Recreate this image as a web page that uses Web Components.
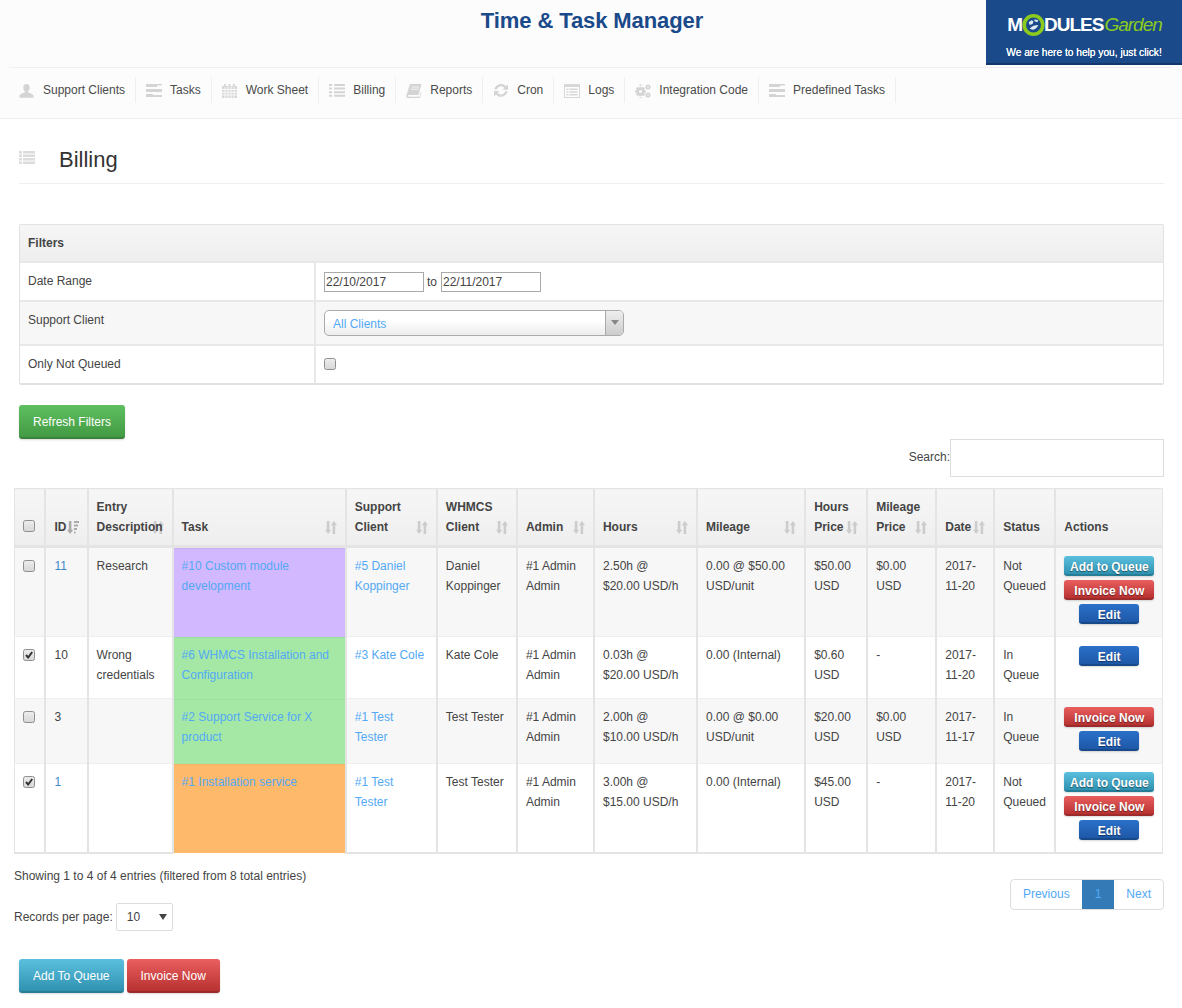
<!DOCTYPE html>
<html><head><meta charset="utf-8"><title>Time &amp; Task Manager</title>
<style>
html,body{margin:0;padding:0;background:#fff}
body{font:12px/20px "Liberation Sans",Arial,sans-serif;color:#444;width:1182px;height:1008px;overflow:hidden}
</style></head><body>
<tm-header></tm-header>
<tm-nav></tm-nav>
<tm-title>Billing</tm-title>
<tm-filters></tm-filters>
<tm-btn color="green" size="big" style="margin:20px 0 0 19px">Refresh Filters</tm-btn>
<tm-search></tm-search>
<tm-table></tm-table>
<tm-footer></tm-footer>
<script>
const ICONS={
user:'<svg width="15" height="14" viewBox="0 1 15 14"><path fill="#d4d4d4" d="M7.500 1C9.600 1 10.800 2.600 10.800 4.600 10.800 6.400 9.900 7.600 9.200 8.200V9.400C11 10 14.500 10.800 14.500 13V14.800H.5V13C.5 10.800 4 10 5.800 9.400V8.200C5.100 7.600 4.200 6.400 4.200 4.600 4.200 2.600 5.400 1 7.500 1Z"/></svg>',
tasks:'<svg width="16" height="13" viewBox="0 0 16 13"><path fill="#d4d4d4" d="M0 0h16v1.400H11V3H0zM0 5h16v3H0zM0 10h7v1h9v2H0z"/></svg>',
cal:'<svg width="15" height="14" viewBox="0 0 15 14"><path fill="#d8d8d8" d="M0 2h15v12H0z"/><path stroke="#fcfcfc" stroke-width=".9" d="M0 5.500h15M0 8.300h15M0 11h15M3 2v12M6 2v12M9 2v12M12 2v12"/><path fill="#d8d8d8" d="M2 0h2v3H2zM6.500 0h2v3h-2zM11 0h2v3h-2z"/></svg>',
list:'<svg width="16" height="13" viewBox="0 0 16 13"><path fill="#d4d4d4" d="M0 0h3v2H0zM5 0h11v2H5zM0 3.600h3v2H0zM5 3.600h11v2H5zM0 7.200h3v2H0zM5 7.200h11v2H5zM0 10.800h3v2H0zM5 10.800h11v2H5z"/></svg>',
tlist:'<svg width="16" height="13" viewBox="0 0 16 13"><path fill="#dcdcdc" d="M0 0h3v2.400H0zM4 0h12v2.400H4zM0 3.500h3v2.400H0zM4 3.500h12v2.400H4zM0 7h3v2.400H0zM4 7h12v2.400H4zM0 10.500h3v2.400H0zM4 10.500h12v2.400H4z"/></svg>',
book:'<svg width="16" height="14" viewBox="0 0 16 14"><path fill="#d4d4d4" d="M4 0H15.500L12.500 11H3C2.300 11 2 11.500 2.100 12S2.600 12.800 3.200 12.800H13.500L14.800 8 15.500 9 13.800 14H2.500C.8 14 0 13 .3 11.400Z"/><path stroke="#fcfcfc" stroke-width=".8" d="M5.500 3H13M5 5.200H12.500"/></svg>',
cron:'<svg width="16" height="14" viewBox="0 1 16 14"><path fill="#d4d4d4" d="M8 1C10 1 11.800 1.900 13 3.300L15 1.400V6.800H9.600L11.400 5C10.600 4 9.400 3.300 8 3.300 6 3.300 4.300 4.700 3.800 6.500H1.400C2 3.400 4.700 1 8 1ZM1 8H6.400L4.600 9.800C5.400 10.800 6.600 11.500 8 11.500 10 11.500 11.700 10.100 12.200 8.300H14.600C14 11.400 11.300 13.800 8 13.800 6 13.800 4.200 12.900 3 11.500L1 13.400Z"/></svg>',
logs:'<svg width="16" height="14" viewBox="0 0 16 14"><path fill="#d8d8d8" d="M0 0h16v14H0z"/><path fill="#fcfcfc" d="M1 3h14v10H1z"/><path fill="#d8d8d8" d="M2.500 4.500h2v1.400h-2zM5.500 4.500h8v1.400h-8zM2.500 7.300h2v1.400h-2zM5.500 7.300h8v1.400h-8zM2.500 10h2v1.400h-2zM5.500 10h8v1.400h-8z"/></svg>',
gears:'<svg width="16" height="14" viewBox="0 0 16 14"><g fill="none" stroke="#d4d4d4"><circle cx="5.500" cy="7.500" r="3" stroke-width="3"/><circle cx="13" cy="3" r="1.700" stroke-width="1.800"/><circle cx="13" cy="11" r="1.700" stroke-width="1.800"/><path stroke-width="2" d="M5.500 2V0.500M5.500 13v1.500M0 7.500h1.500M9.500 7.500H11M1.700 3.700l1 1M8.300 10.300l1 1M1.700 11.300l1-1M8.300 4.700l1-1"/></g></svg>'
};
function tpl(css,html){return `<style>${css}</style>${html}`}
class TmBase extends HTMLElement{
  constructor(){super();this.attachShadow({mode:'open'})}
  set(css,html){this.shadowRoot.innerHTML=tpl(css,html)}
}
customElements.define('tm-btn',class extends TmBase{connectedCallback(){
  const c={green:['#5fc060','#439a43','#3a843a'],cyan:['#5bc0de','#2f92b0','#277c96'],red:['#ea5e5e','#b83232','#9c2b2b'],blue:['#2b70c9','#1e58a8','#184988']}[this.getAttribute('color')];
  const big=this.getAttribute('size')==='big';
  this.set(`:host{display:${big?'inline-block':'block'};box-sizing:border-box;${big?'height:34px;padding:0 14px;line-height:34px;font-size:12px;':`height:20px;line-height:22px;font-size:12px;font-weight:bold;text-shadow:0 1px 1px rgba(0,0,0,.45);margin:0 auto 4px;`}
   color:#fff;text-align:center;white-space:nowrap;border-radius:3px;border-bottom:2px solid ${c[2]};background:linear-gradient(${c[0]},${c[1]});box-shadow:0 1px 2px rgba(0,0,0,.15)}`,`<slot></slot>`);
}});
customElements.define('tm-check',class extends TmBase{connectedCallback(){
  const on=this.hasAttribute('checked');
  this.set(`:host{display:block;width:12px;height:12px;line-height:0}
  input{appearance:none;-webkit-appearance:none;box-sizing:border-box;width:12px;height:12px;margin:0;display:block;border:1px solid #8f8f8f;border-radius:2.500px;background:linear-gradient(#ececec,#d8d8d8);position:relative}
  svg{position:absolute;left:1px;top:1px}
  div{position:relative}`,`<div><input type="checkbox" ${on?'checked':''} aria-label="select">${on?'<svg width="10" height="10" viewBox="0 0 10 10"><path fill="none" stroke="#333" stroke-width="2" d="M2 5l2.200 2.500L8.200 2"/></svg>':''}</div>`);
}});
customElements.define('tm-header',class extends TmBase{connectedCallback(){
  this.set(`:host{display:flex;justify-content:center;position:relative;height:67px;background:#fcfcfc;box-sizing:border-box}
  h1{margin:6px 0 0;padding-left:2px;letter-spacing:-.1px;font:bold 22px/29px "Liberation Sans",Arial,sans-serif;color:#1a4a8a}
  .logo{position:absolute;right:0;top:0;width:196px;height:65px;box-sizing:border-box;background:#1a4a8a;border-bottom:2px solid #123768;color:#fff;display:flex;flex-direction:column;align-items:center}
  .brand{display:flex;align-items:center;height:24px;margin-top:13px;font:bold 19px/24px "Liberation Sans",Arial,sans-serif;letter-spacing:-1px;padding-left:1px}
  .brand svg{margin:0 -1px 0 0}
  .g{font-weight:normal;font-style:italic;color:#8ccb1e;margin-left:1px}
  .sub{font:normal 10.200px/14px "Liberation Sans",Arial,sans-serif;margin-top:9px;text-shadow:0 0 .6px #fff}`,
  `<h1>Time &amp; Task Manager</h1><div class="logo"><div class="brand"><span>M</span><svg width="23" height="24" viewBox="0 0 24 24"><circle cx="12" cy="12" r="9.700" fill="#1a4a8a" stroke="#8ccb1e" stroke-width="3.800"/><path fill="#dfe9f4" d="M7 9l3-2 2 1-1 3-3 1zM13 6l4 1-1 2-3-1zM8 16c2-3 6-4 9-4-1 3-4 5-6 5z"/></svg><span>DULES</span><span class="g">Garden</span></div><div class="sub">We are here to help you, just click!</div></div>`);
}});
customElements.define('tm-nav',class extends TmBase{connectedCallback(){
  const items=[['user','Support Clients'],['tasks','Tasks'],['cal','Work Sheet'],['list','Billing'],['book','Reports'],['cron','Cron'],['logs','Logs'],['gears','Integration Code'],['tasks','Predefined Tasks']];
  this.set(`:host{display:block;height:52px;box-sizing:border-box;background:#fcfcfc;border-bottom:1px solid #efefef;position:relative;padding:10px 0 0 9px}
  :host::before{content:"";position:absolute;left:9px;right:9px;top:0;border-top:1px solid #efefef}
  ul{list-style:none;margin:0;padding:0;display:flex}
  li{display:flex;align-items:center;height:26px;padding:0 10px;border-right:1px solid #efefef;color:#4a4a4a;white-space:nowrap}
  i{display:block;width:24px;height:14px;line-height:0;margin-top:1px}`,
  `<ul>${items.map(([i,t])=>`<li><i>${ICONS[i]}</i><span>${t}</span></li>`).join('')}</ul>`);
}});
customElements.define('tm-title',class extends TmBase{connectedCallback(){
  this.set(`:host{display:flex;align-items:center;box-sizing:border-box;height:65px;margin:0 18px 0 19px;border-bottom:1px solid #efefef;padding-top:18px;font-size:22px;line-height:30px;color:#333}
  i{display:block;width:40px;line-height:0;margin-top:-5px}`,`<i>${ICONS.tlist}</i><slot></slot>`);
}});
customElements.define('tm-filters',class extends TmBase{connectedCallback(){
  this.set(`:host{display:block;margin:40px 18px 0 19px;border:1px solid #e2e2e2;border-bottom-width:2px;border-radius:2px}
  .h{height:36px;line-height:36px;padding-left:8px;font-weight:bold;background:linear-gradient(#f6f6f6,#eee)}
  .r{display:grid;grid-template-columns:294px 1fr;border-top:2px solid #e8e8e8;box-sizing:border-box}
  .r>div{padding-left:8px;box-sizing:border-box}
  .r>div+div{border-left:2px solid #e8e8e8;padding-left:8px;display:flex;align-items:center}
  .alt{background:#f7f7f7}
  input[type=text]{box-sizing:border-box;width:100px;height:20px;margin:1px 0 0;padding:0 1px;border:1px solid #a9a9a9;background:#fff;font:12px "Liberation Sans",Arial,sans-serif;color:#444}
  .to{margin:0 4px 0 3px}
  .sel{box-sizing:border-box;width:300px;height:26px;margin-top:-1px;border:1px solid #aaa;border-radius:5px;background:linear-gradient(#fff 40%,#ececec);display:flex;justify-content:space-between;line-height:26px;padding-left:8px;color:#53a9f5;overflow:hidden}
  .ar{width:17px;border-left:1px solid #aaa;background:linear-gradient(#eee,#ccc);display:flex;align-items:center;justify-content:center}
  .ar b{border:4px solid transparent;border-top:5px solid #888;border-bottom:0}
  tm-check{margin-top:-2px}`,
  `<div class="h">Filters</div>
  <div class="r" style="height:39px"><div style="line-height:36px">Date Range</div><div><input type="text" value="22/10/2017" aria-label="from"><span class="to">to</span><input type="text" value="22/11/2017" aria-label="to"></div></div>
  <div class="r alt" style="height:44px"><div style="line-height:36px">Support Client</div><div><div class="sel"><span>All Clients</span><span class="ar"><b></b></span></div></div></div>
  <div class="r" style="height:39px"><div style="line-height:36px">Only Not Queued</div><div><tm-check></tm-check></div></div>`);
}});
customElements.define('tm-search',class extends TmBase{connectedCallback(){
  this.set(`:host{display:flex;justify-content:flex-end;align-items:center;margin:0 18px 0 0;height:38px;position:absolute;left:0;right:0;top:439px}
  span{margin-bottom:2px}
  input{box-sizing:border-box;width:214px;height:38px;margin:0;border:1px solid #ddd;background:#fff}`,`<span>Search:</span><input type="text" aria-label="search">`);
}});
customElements.define('tm-sort',class extends TmBase{connectedCallback(){
  const s=this.hasAttribute('active');
  this.set(`:host{display:block;position:absolute;right:8px;bottom:11px;width:12px;height:13px;line-height:0;z-index:-1}`,
  s?`<svg width="12" height="13" viewBox="0 0 12 13"><path fill="#aaa" d="M1.800 0h2.600v8.800h1.800L3.100 13 0 8.800h1.800zM7 0h5v2H7zM7 3.500h4v2H7zM7 7h3v2H7zM7 10.500h1.500v2H7z"/></svg>`
   :`<svg width="12" height="13" viewBox="0 0 12 13"><path fill="#ccc" d="M1.800 0h2.600v8.800h1.800L3.100 13 0 8.800h1.800zM7.600 13h2.600V4.200H12L8.900 0 5.800 4.200h1.800z"/></svg>`);
}});
customElements.define('tm-table',class extends TmBase{connectedCallback(){
  const W=[30,43,85,173,91,80,77,103,108,62,69,58,61,107];
  const H=[[''],['ID',1,1],['Entry<br>Description',1],['Task',1],['Support<br>Client',1],['WHMCS<br>Client',1],['Admin',1],['Hours',1],['Mileage',1],['Hours<br>Price',1],['Mileage<br>Price',1],['Date',1],['Status'],['Actions']];
  const btn={a:['cyan','Add to Queue'],i:['red','Invoice Now'],e:['blue','Edit']};
  const R=[
   {h:90,c:0,col:'#d2b8ff',id:11,link:1,d:'Research',t:'#10 Custom module development',sc:'#5 Daniel<br>Koppinger',wc:'Daniel<br>Koppinger',hr:'2.50h @<br>$20.00 USD/h',m:'0.00 @ $50.00<br>USD/unit',hp:'$50.00<br>USD',mp:'$0.00<br>USD',dt:'2017-<br>11-20',st:'Not<br>Queued',b:'aie',top:0},
   {h:62,c:1,col:'#a5e8a5',id:10,d:'Wrong<br>credentials',t:'#6 WHMCS Installation and Configuration',sc:'#3 Kate Cole',wc:'Kate Cole',hr:'0.03h @<br>$20.00 USD/h',m:'0.00 (Internal)',hp:'$0.60<br>USD',mp:'-',dt:'2017-<br>11-20',st:'In<br>Queue',b:'e',top:1},
   {h:65,c:0,col:'#a5e8a5',id:3,d:'',t:'#2 Support Service for X product',sc:'#1 Test<br>Tester',wc:'Test Tester',hr:'2.00h @<br>$10.00 USD/h',m:'0.00 @ $0.00<br>USD/unit',hp:'$20.00<br>USD',mp:'$0.00<br>USD',dt:'2017-<br>11-17',st:'In<br>Queue',b:'ie',top:0},
   {h:89,c:1,col:'#ffb96b',id:1,link:1,d:'',t:'#1 Installation service',sc:'#1 Test<br>Tester',wc:'Test Tester',hr:'3.00h @<br>$15.00 USD/h',m:'0.00 (Internal)',hp:'$45.00<br>USD',mp:'-',dt:'2017-<br>11-20',st:'Not<br>Queued',b:'aie',top:0}
  ];
  this.set(`:host{display:block;position:absolute;left:14px;top:488px;width:1149px}
  table{border-collapse:collapse;table-layout:fixed;width:1149px;font-size:12px;line-height:20px}
  th,td{border:2px solid #e4e4e4;padding:8px;vertical-align:top;text-align:left;box-sizing:border-box;overflow:visible}
  th:nth-child(-n+2),td:nth-child(-n+2){padding-left:9px}
  th{position:relative;z-index:0;vertical-align:bottom;height:57px;font-weight:bold;background:linear-gradient(#f6f6f6,#eee);border-top-width:1px;border-bottom-width:3px;white-space:nowrap}
  th:first-child,td:first-child{border-left-width:1px}
  th:last-child,td:last-child{border-right-width:1px}
  td{border-top:1px solid #eee;border-bottom:1px solid #eee}
  tr:last-child td{border-bottom:2px solid #e4e4e4}
  tr.alt td{background:#f7f7f7}
  tr td.col{border-top:0;border-bottom:0;box-shadow:inset 0 1px 0 rgba(0,0,0,.04)}
  a{color:#53a9f5;text-decoration:none}
  a.id{color:#3f89c9}
  tm-check{margin:4px 0 0 -1px}
  th tm-check{margin:0 0 5px -1px}
  td tm-btn:last-child{margin-bottom:0}
  .add,.inv{width:90px}.edit{width:60px}`,
  `<table><colgroup>${W.map(w=>`<col style="width:${w}px">`).join('')}</colgroup>
  <thead><tr>${H.map(([t,s,a],i)=>`<th>${i===0?'<tm-check></tm-check>':t}${s?`<tm-sort ${a?'active':''}></tm-sort>`:''}</th>`).join('')}</tr></thead>
  <tbody>${R.map(r=>`<tr class="${r.c?'':'alt'}" style="height:${r.h}px">
   <td><tm-check ${r.c?'checked':''}></tm-check></td><td>${r.link?`<a class="id" href="#">${r.id}</a>`:r.id}</td><td>${r.d}</td>
   <td class="col" style="background:${r.col}"><a href="#">${r.t}</a></td><td><a href="#">${r.sc}</a></td><td>${r.wc}</td><td>#1 Admin<br>Admin</td><td>${r.hr}</td><td>${r.m}</td><td>${r.hp}</td><td>${r.mp}</td><td>${r.dt}</td><td>${r.st}</td>
   <td><div style="padding-top:${r.top}px">${[...r.b].map(x=>`<tm-btn color="${btn[x][0]}" class="${x==='e'?'edit':x==='a'?'add':'inv'}">${btn[x][1]}</tm-btn>`).join('')}</div></td></tr>`).join('')}</tbody></table>`);
}});
customElements.define('tm-footer',class extends TmBase{connectedCallback(){
  this.set(`:host{display:block;position:absolute;left:0;right:0;top:866px}
  .row{display:flex;justify-content:space-between;padding:0 18px 0 14px}
  .perpage{display:flex;align-items:center;margin-top:17px;height:28px}
  .s{box-sizing:border-box;width:57px;height:28px;margin-left:3px;border:1px solid #ddd;border-radius:2px;padding-left:10px;line-height:27px;background:#fff;position:relative}
  .s b{position:absolute;right:5px;top:10px;border:4px solid transparent;border-top:6px solid #444;border-bottom:0}
  .pg{display:flex;height:31px;margin-top:13px;border:1px solid #ddd;border-radius:4px;box-sizing:border-box;line-height:29px;color:#53a9f5;overflow:hidden}
  .pg span{padding:0 12px}.pg .on{background:#337ab7;padding:0 13px;margin:-1px 0;line-height:31px}
  .btns{display:flex;gap:3px;margin:28px 0 0 19px}`,
  `<div class="row"><div><div>Showing 1 to 4 of 4 entries (filtered from 8 total entries)</div><div class="perpage"><span>Records per page:</span><div class="s">10<b></b></div></div></div>
  <div class="pg"><span>Previous</span><span class="on">1</span><span>Next</span></div></div>
  <div class="btns"><tm-btn color="cyan" size="big">Add To Queue</tm-btn><tm-btn color="red" size="big">Invoice Now</tm-btn></div>`);
}});
</script>
</body></html>
